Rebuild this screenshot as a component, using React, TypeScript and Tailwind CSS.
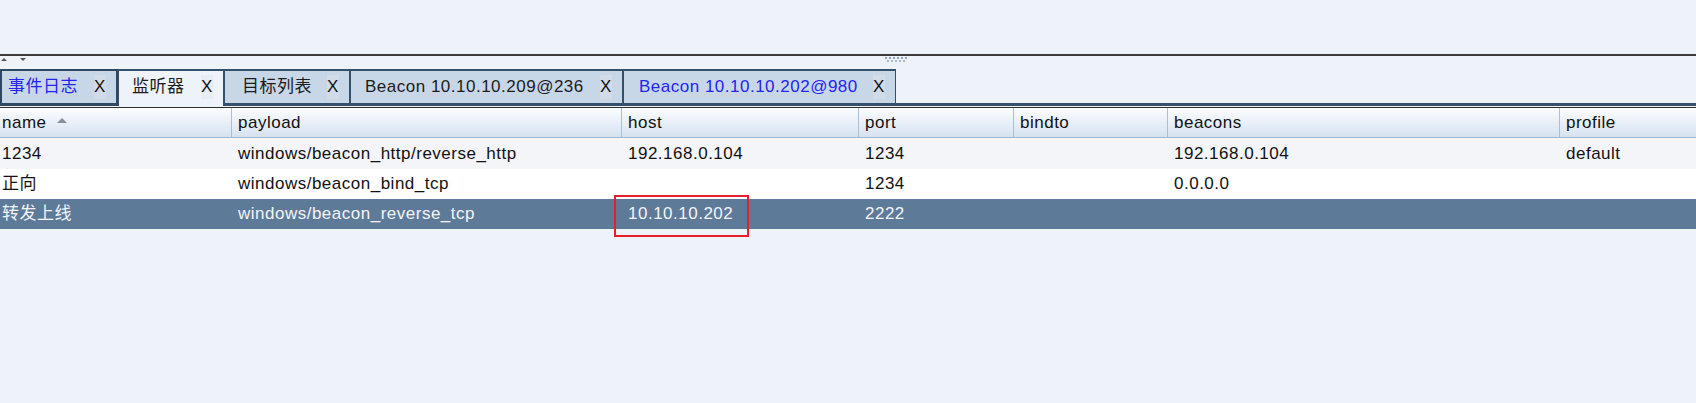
import React from "react";

type Tab = {
  label: string;
  width: string;
  pad: string;
  blue?: boolean;
  focused?: boolean;
  selected?: boolean;
};

const tabs: Tab[] = [
  { label: "事件日志", width: "w-[118px]", pad: "pl-[6px]", blue: true, focused: true },
  { label: "监听器", width: "w-[106px]", pad: "pl-[13px]", selected: true },
  { label: "目标列表", width: "w-[126px]", pad: "pl-[17px]" },
  { label: "Beacon 10.10.10.209@236", width: "w-[273px]", pad: "pl-[14px]" },
  { label: "Beacon 10.10.10.202@980", width: "w-[273px]", pad: "pl-[15px]", blue: true },
];

const columns = ["name", "payload", "host", "port", "bindto", "beacons", "profile"];

const rows = [
  ["1234", "windows/beacon_http/reverse_http", "192.168.0.104", "1234", "", "192.168.0.104", "default"],
  ["正向", "windows/beacon_bind_tcp", "", "1234", "", "0.0.0.0", ""],
  ["转发上线", "windows/beacon_reverse_tcp", "10.10.10.202", "2222", "", "", ""],
];

const grid = "grid grid-cols-[232px_390px_237px_155px_154px_392px_1fr]";

function TabItem({ tab }: { tab: Tab }) {
  let box = "border-t-2 border-x border-b-[3px] border-[#34506b] bg-[#c8d7e7]";
  if (tab.focused) box = "border-2 border-b-[3px] border-[#2f4962] bg-[#c8d7e7]";
  if (tab.selected) box = "border-t-2 border-x border-b-0 border-[#34506b] bg-[#eef2f9] pb-[3px]";
  return (
    <div className={`${tab.width} ${tab.pad} ${box} flex h-full items-center pr-[10px]`}>
      <span className={tab.blue ? "text-[#2424f0]" : "text-[#1c1c1c]"}>{tab.label}</span>
      <span
        className={`ml-auto flex h-[24px] w-[12px] items-center justify-center text-[#111] ${
          tab.selected ? "bg-[#e8edf5]" : "bg-[#d2dce8]"
        }`}
      >
        X
      </span>
    </div>
  );
}

export default function App() {
  return (
    <div
      className="relative h-[403px] w-full overflow-hidden bg-[#eef2f9] text-[17px] tracking-[0.5px] text-[#111]"
      style={{ fontFamily: '"Liberation Sans", Arial, "Noto Sans CJK SC", sans-serif' }}
    >
      <div className="h-[54px]" />
      <div className="h-[2px] bg-[#3b3b3b]" />

      {/* split pane strip */}
      <div className="relative flex h-[13px] items-start">
        <div className="ml-[1px] mt-[2px] h-0 w-0 border-x-[3px] border-b-[3px] border-x-transparent border-b-[#555]" />
        <div className="ml-[13px] mt-[2px] h-0 w-0 border-x-[3px] border-t-[3px] border-x-transparent border-t-[#555]" />
        <svg className="absolute left-[884px] top-[1px]" width="26" height="6" viewBox="0 0 26 6">
          {[0, 4, 8, 12, 16, 20].map((x) => (
            <rect key={x} x={x + 1} y={0} width="2" height="2" fill="#8ea3bb" />
          ))}
          {[0, 4, 8, 12, 16].map((x) => (
            <rect key={x} x={x + 3} y={3} width="2" height="2" fill="#a8b8cb" />
          ))}
        </svg>
      </div>

      {/* tabs */}
      <div className="flex h-[37px]">
        {tabs.map((t) => (
          <TabItem key={t.label} tab={t} />
        ))}
        <div className="flex-1 border-b-[3px] border-[#34506b]" />
      </div>
      <div className="h-px" />
      <div className="h-px bg-[#2d2d2d]" />

      {/* header */}
      <div className={`${grid} h-[30px] border-b border-[#9cb7d4] bg-linear-to-b from-[#fcfdfe] to-[#d6e2f0]`}>
        {columns.map((c, i) => (
          <div
            key={c}
            className={`flex items-center ${i === 0 ? "pl-[2px]" : "pl-[6px]"} ${
              i < columns.length - 1 ? "border-r border-[#a8c0da]" : ""
            }`}
          >
            {c}
            {i === 0 && (
              <span className="ml-[10px] mb-[5px] h-0 w-0 border-x-[5px] border-b-[5px] border-x-transparent border-b-[#868f99]" />
            )}
          </div>
        ))}
      </div>

      {/* rows */}
      {rows.map((r, ri) => {
        const bg = ri === 0 ? "bg-[#f4f5f9] h-[31px]" : ri === 1 ? "bg-white h-[30px]" : "bg-[#5e7a99] h-[30px] text-[#f2f4f7]";
        return (
          <div key={ri} className={`${grid} ${bg}`}>
            {r.map((cell, ci) => (
              <div key={ci} className={`relative flex items-center ${ci === 0 ? "pl-[2px]" : "pl-[6px]"}`}>
                {cell}
                {ri === 2 && ci === 2 && (
                  <div className="absolute left-[-8px] top-[-4px] h-[42px] w-[135px] border-2 border-[#e3212b]" />
                )}
              </div>
            ))}
          </div>
        );
      })}
    </div>
  );
}
